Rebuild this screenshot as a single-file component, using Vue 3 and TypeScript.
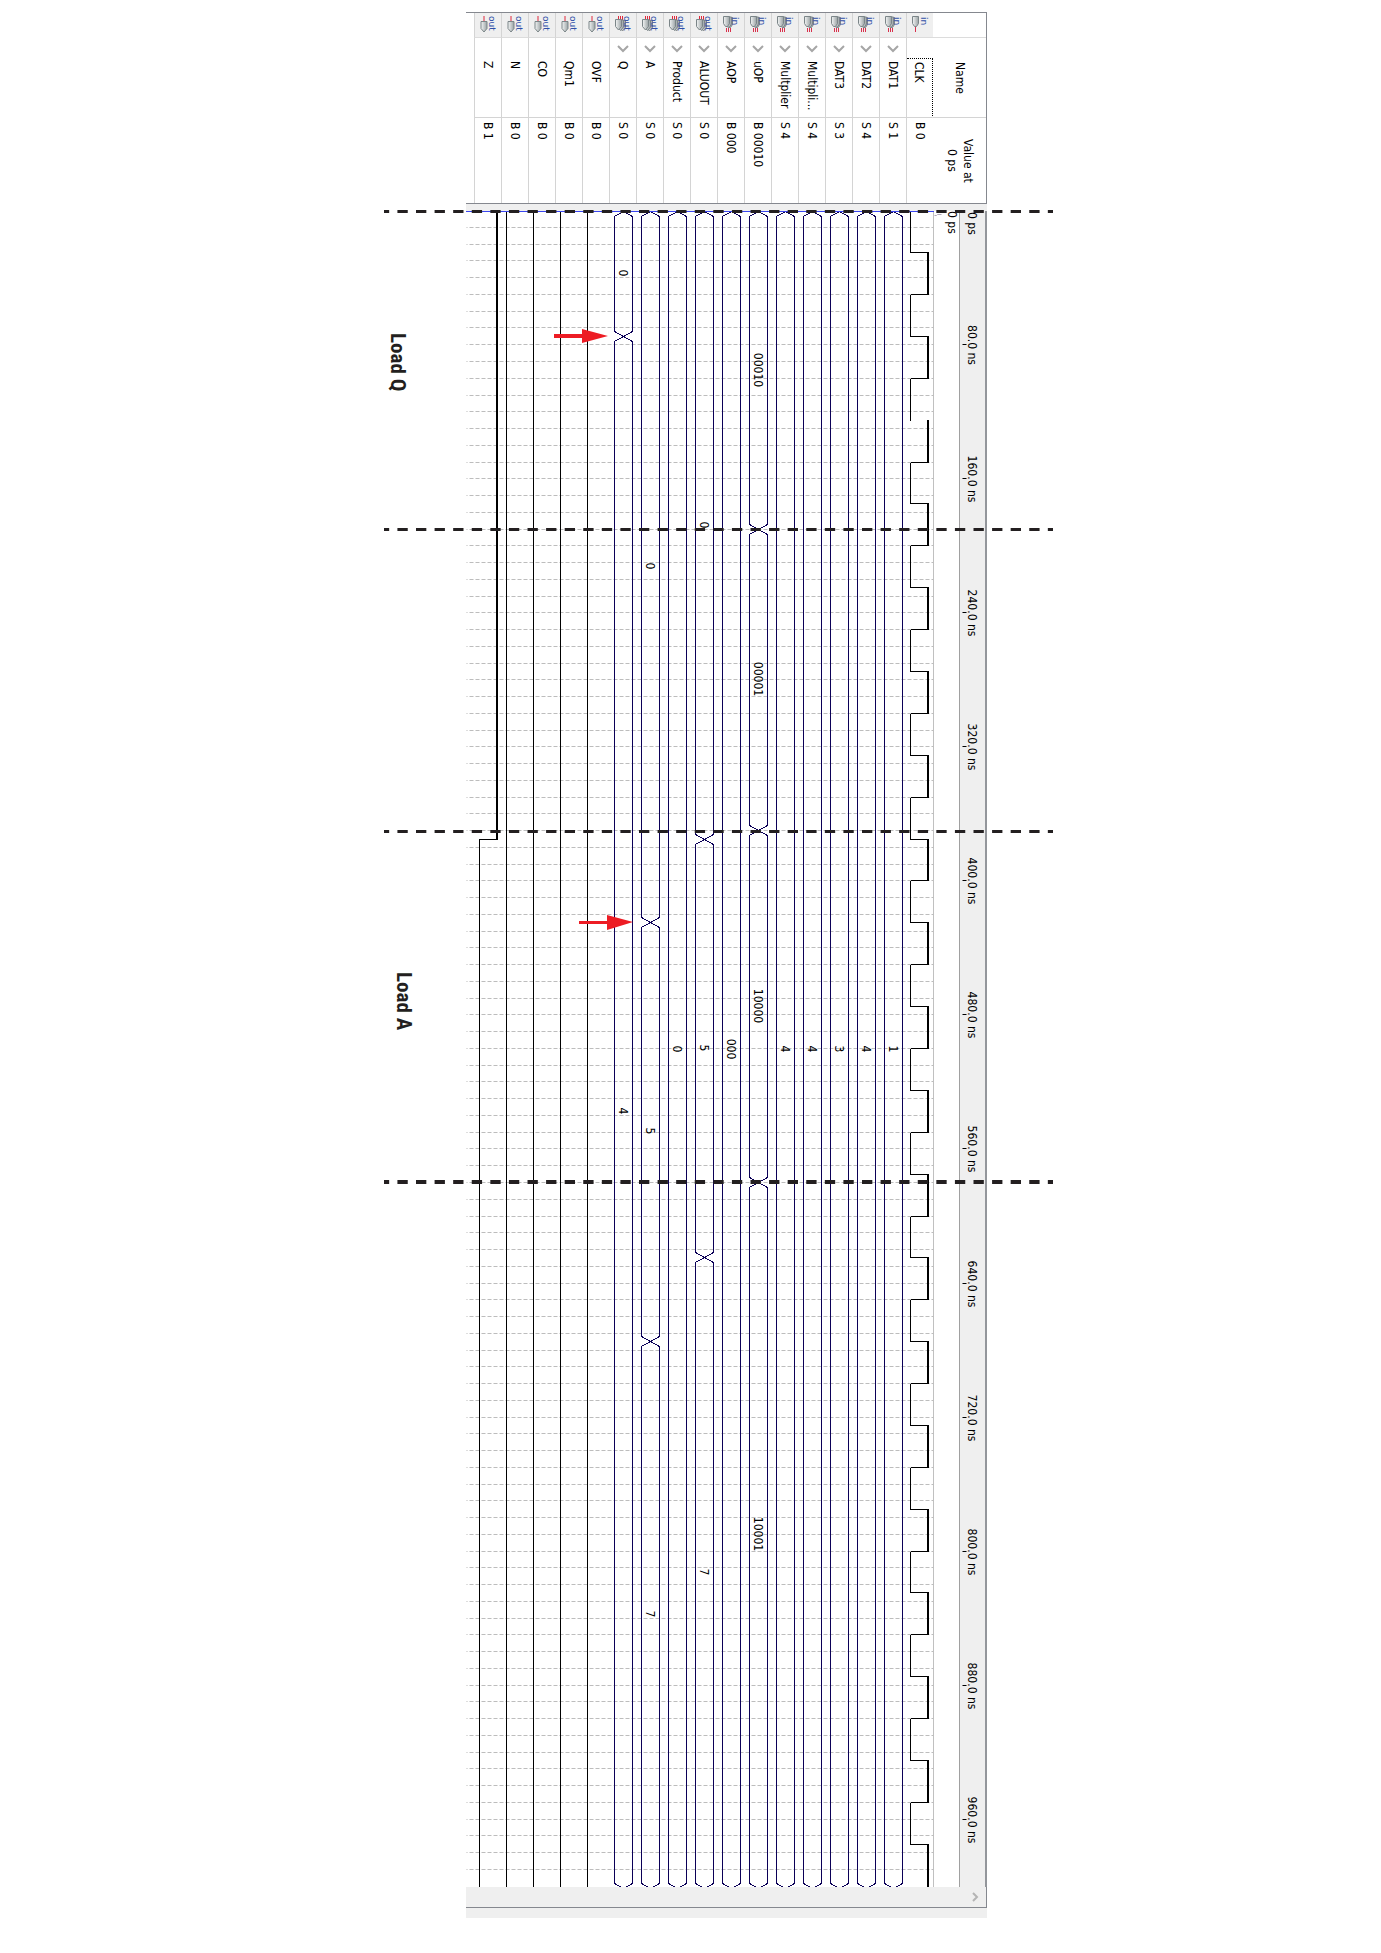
<script setup lang="ts">
interface Signal {
  name: string
  value: string
  dir: 'in' | 'out'
  kind: 'clock' | 'bit' | 'bus'
  edges?: number[]
  labels?: string[]
}

const signals: Signal[] = [
  { name: 'CLK', value: 'B 0', dir: 'in', kind: 'clock' },
  { name: 'DAT1', value: 'S 1', dir: 'in', kind: 'bus', labels: ['1'] },
  { name: 'DAT2', value: 'S 4', dir: 'in', kind: 'bus', labels: ['4'] },
  { name: 'DAT3', value: 'S 3', dir: 'in', kind: 'bus', labels: ['3'] },
  { name: 'Multipli...', value: 'S 4', dir: 'in', kind: 'bus', labels: ['4'] },
  { name: 'Multplier', value: 'S 4', dir: 'in', kind: 'bus', labels: ['4'] },
  { name: 'uOP', value: 'B 00010', dir: 'in', kind: 'bus', edges: [190, 370, 580], labels: ['00010', '00001', '10000', '10001'] },
  { name: 'AOP', value: 'B 000', dir: 'in', kind: 'bus', labels: ['000'] },
  { name: 'ALUOUT', value: 'S 0', dir: 'out', kind: 'bus', edges: [375, 625], labels: ['0', '5', '7'] },
  { name: 'Product', value: 'S 0', dir: 'out', kind: 'bus', labels: ['0'] },
  { name: 'A', value: 'S 0', dir: 'out', kind: 'bus', edges: [425, 675], labels: ['0', '5', '7'] },
  { name: 'Q', value: 'S 0', dir: 'out', kind: 'bus', edges: [75], labels: ['0', '4'] },
  { name: 'OVF', value: 'B 0', dir: 'out', kind: 'bit' },
  { name: 'Qm1', value: 'B 0', dir: 'out', kind: 'bit' },
  { name: 'CO', value: 'B 0', dir: 'out', kind: 'bit' },
  { name: 'N', value: 'B 0', dir: 'out', kind: 'bit' },
  { name: 'Z', value: 'B 1', dir: 'out', kind: 'bit' },
]

const H = 1676
// nanoseconds to chart position
const at = (ns: number): number => Math.max(0, Math.round(ns * 1.6755 - 0.8))
const left = (i: number): number => (i === 0 ? 439 : 440 - 27 * i)

const gridLines = Array.from({ length: 99 }, (_, k) => at((k + 1) * 10))
const ticks = Array.from({ length: 12 }, (_, k) => (k + 1) * 80)

const lowX = left(0) + 5
const highX = left(0) + 23
const clockLow: string[] = []
const clockHigh: string[] = []
for (let t = 0; t < 1000; t += 50) {
  const rise = at(t + 25)
  const last = t === 950
  const fall = last ? H : at(t + 50)
  clockLow.push(`M${lowX} ${at(t)}V${rise}${t === 100 ? '' : `H${highX}`}`)
  clockHigh.push(`M${highX - 1} ${rise}h2V${fall}h-2z`)
  if (!last) clockLow.push(`M${highX} ${fall}H${lowX}`)
}

const zRow = left(16)
const zFall = at(375)

function busPath(i: number, edges: number[] = []): string {
  const l = left(i) + 5
  const r = l + 18
  const c = l + 9
  const stops = [0, ...edges.map(at), H + 1]
  let d = ''
  for (let s = 0; s < stops.length - 1; s++) {
    const a = stops[s]
    const b = stops[s + 1]
    d += `M${c} ${a}L${l} ${a + 5}V${b - 5}L${c} ${b}M${c} ${a}L${r} ${a + 5}V${b - 5}L${c} ${b}`
  }
  return d
}

interface Label { x: number; y: number; text: string }
const labels: Label[] = signals.flatMap((s, i) => {
  const stops = [0, ...(s.edges ?? []).map(at), H]
  return (s.labels ?? []).map((text, k) => ({ x: left(i) + 10, y: Math.floor((stops[k] + stops[k + 1]) / 2), text }))
})

const markers = [
  { y: 211, w: 3 },
  { y: 529, w: 3 },
  { y: 831, w: 3 },
  { y: 1182, w: 4 },
]
</script>

<template>
  <main class="page">
    <figure class="figure">
      <section class="panel">
        <div class="signals">
          <table>
            <thead>
              <tr>
                <th class="pin"></th>
                <th class="name-head">Name</th>
                <th class="value-head">Value at<br />0 ps</th>
              </tr>
            </thead>
            <tbody>
              <tr v-for="s in signals" :key="s.name">
                <td class="pin">
                  <svg width="26" height="24" viewBox="0 0 26 24" aria-hidden="true">
                    <defs>
                      <linearGradient id="metal" x1="0" x2="1" y1="0" y2="0">
                        <stop offset="0" stop-color="#f4f6f6" />
                        <stop offset="1" stop-color="#9aa2a4" />
                      </linearGradient>
                    </defs>
                    <g v-if="s.dir === 'out' && s.kind === 'bit'">
                      <path d="M9 3v5" stroke="#e0283c" />
                      <path d="M6 8.500h6v7l-3 3.500l-3-3.500z" fill="url(#metal)" stroke="#7b8588" />
                    </g>
                    <g v-else-if="s.dir === 'out'">
                      <path d="M8.500 3v4M10.500 3v4M12.500 3v4" stroke="#e0283c" />
                      <path d="M9.500 7.500h6v7l-3 3.500l-3-3.500z" fill="url(#metal)" stroke="#7b8588" />
                      <path d="M7.500 7h6v7l-3 3.500l-3-3.500z" fill="url(#metal)" stroke="#7b8588" />
                      <path d="M5.500 6.500h6v7l-3 3.500l-3-3.500z" fill="url(#metal)" stroke="#7b8588" />
                    </g>
                    <g v-else-if="s.kind === 'clock'">
                      <path d="M8.500 14v5" stroke="#d8304c" />
                      <path d="M5.500 3.500h6v7l-2 3h-2l-2-3z" fill="url(#metal)" stroke="#7b8588" />
                    </g>
                    <g v-else>
                      <path d="M8.500 15v4M10.500 15v4M12.500 15v4" stroke="#d8304c" />
                      <path d="M9.500 4.500h5v7l-2 3h-2l-2-3z" fill="url(#metal)" stroke="#7b8588" />
                      <path d="M7.500 4h6v7l-2 3h-2l-2-3z" fill="url(#metal)" stroke="#7b8588" />
                      <path d="M5.500 3.500h6v7l-2 3h-2l-2-3z" fill="url(#metal)" stroke="#7b8588" />
                    </g>
                    <text v-if="s.dir === 'out'" class="pin-text" transform="translate(14 3) rotate(90)">out</text>
                    <text v-else class="pin-text" transform="translate(14 4) rotate(90)">in</text>
                  </svg>
                </td>
                <td class="name">
                  <div class="name-row">
                    <svg class="chevron" width="12" height="12" viewBox="0 0 12 12" aria-hidden="true">
                      <path v-if="s.kind === 'bus'" d="M1 3l5 5l5-5" fill="none" stroke="#a6a6a6" stroke-width="2" />
                    </svg>
                    <span :class="{ focused: s.kind === 'clock' }">{{ s.name }}</span>
                  </div>
                </td>
                <td class="value">{{ s.value }}</td>
              </tr>
            </tbody>
          </table>
        </div>
        <div class="gap"></div>
        <svg class="chart" width="521" :height="H" :viewBox="`0 0 521 ${H}`" role="img" aria-label="Waveforms">
          <rect x="0" y="0" width="521" :height="H" fill="#fff" />
          <rect x="494" y="0" width="25" :height="H" fill="#efefef" />
          <rect x="493" y="0" width="1" :height="H" fill="#a0a0a0" />
          <rect x="519" y="0" width="2" :height="H" fill="#93969b" />
          <rect x="467" y="0" width="1" :height="H" fill="#c0c0c0" />
          <g transform="translate(0.5 0.5)" fill="none">
            <path v-for="y in gridLines" :key="y" :d="`M0 ${y}H467`" stroke="#bdbdbd" stroke-dasharray="4 2" stroke-dashoffset="3" />
            <path v-for="t in ticks" :key="t" :d="`M496 ${at(t)}h4`" stroke="#000" />
            <path d="M468 4h2l1-1h4" stroke="#b0a8b8" />
            <g shape-rendering="crispEdges">
              <template v-for="(s, i) in signals" :key="s.name">
                <path v-if="s.kind === 'bus'" :d="busPath(i, s.edges)" stroke="#0b0057" />
                <path v-else-if="s.kind === 'bit' && s.name !== 'Z'" :d="`M${left(i) + 5} 0V${H}`" stroke="#000" />
              </template>
              <path :d="clockLow.join('')" stroke="#000" />
              <path :d="`M${zRow + 23} ${zFall}H${zRow + 5}V${H}`" stroke="#000" />
            </g>
          </g>
          <path :d="clockHigh.join('')" />
          <rect :x="zRow + 22" y="0" width="2" :height="zFall + 1" />
          <rect x="0" y="0" width="468" height="1" fill="#3a46f0" />
          <text v-for="l in labels" :key="`${l.x}-${l.y}`" class="mark" :transform="`translate(${l.x} ${l.y}) rotate(90)`">{{ l.text }}</text>
          <text v-for="t in ticks" :key="t" class="mark" :transform="`translate(502 ${at(t) + 1}) rotate(90)`">{{ t }}.0 ns</text>
          <text class="mark start" transform="translate(502 1) rotate(90)">0 ps</text>
          <text class="mark start" transform="translate(482 0) rotate(90)">0 ps</text>
        </svg>
        <div class="scroll-end">
          <svg width="8" height="10" viewBox="0 0 8 10" aria-hidden="true">
            <path d="M1 1l4 4l-4 4" fill="none" stroke="#b4b4b4" stroke-width="2" />
          </svg>
        </div>
        <div class="footer"></div>
      </section>

      <svg class="notes" width="669" height="1953" viewBox="0 0 669 1953" role="img" aria-label="Load Q and Load A phases">
        <path
          v-for="m in markers"
          :key="m.y"
          :d="m.w % 2 ? `M0 ${m.y + 0.5}H669` : `M0 ${m.y}H669`"
          :stroke-width="m.w"
          pathLength="648"
          stroke="#231f20"
          stroke-dasharray="10 8"
          stroke-dashoffset="5"
        />
        <path d="M170 334h28v-5l26 7l-26 7v-5h-28z" fill="#ed1c24" />
        <path d="M195 921h28v-6l26 7l-26 8v-6h-28z" fill="#ed1c24" />
        <text class="phase" transform="translate(7 333) rotate(90)">Load Q</text>
        <text class="phase" transform="translate(13 972) rotate(90)">Load A</text>
      </svg>
    </figure>
  </main>
</template>

<style>
body {
  margin: 0;
  background: #fff;
}
</style>

<style scoped>
.page {
  display: flex;
  justify-content: center;
  min-height: 100vh;
  padding-left: 56px;
  box-sizing: border-box;
  font: 12px/16px "DejaVu Sans Condensed", "DejaVu Sans", sans-serif;
  color: #000;
}
.figure {
  position: relative;
  flex: none;
  width: 669px;
  margin: 0;
  padding-top: 12px;
  box-sizing: border-box;
}
.panel {
  width: 521px;
  margin-left: 82px;
}
.signals {
  display: flex;
  justify-content: flex-end;
  height: 192px;
  box-sizing: border-box;
  border: 1px solid #85888f;
  border-left: 0;
  background: #fff;
}
table {
  writing-mode: vertical-rl;
  border-spacing: 0;
  table-layout: fixed;
  inline-size: 190px;
}
th,
td {
  box-sizing: border-box;
  padding: 0;
  font-weight: 400;
  white-space: nowrap;
}
th {
  block-size: 53px;
  text-align: center;
}
td {
  block-size: 27px;
  border-block-end: 1px solid #d4d4d4;
}
.pin {
  inline-size: 25px;
  border-inline-end: 1px solid #dcdcdc;
}
td.pin {
  background: #efefef;
}
.pin svg {
  display: block;
  writing-mode: horizontal-tb;
}
.name,
.name-head {
  inline-size: 80px;
  border-inline-end: 1px solid #d4d4d4;
}
.name-row {
  display: flex;
  align-items: center;
  gap: 3px;
  block-size: 26px;
  padding-inline-start: 5px;
}
.name-row span {
  flex: 1;
  padding-inline-start: 3px;
  line-height: 26px;
}
.chevron {
  flex: none;
}
.name-row .focused {
  margin-inline-end: 1px;
  box-sizing: border-box;
  block-size: 26px;
  border-inline-start: 1px dotted #000;
  border-block-start: 1px dotted #000;
}
.value {
  padding-inline-start: 4px;
}
.pin-text {
  font: 9px "DejaVu Sans", sans-serif;
  fill: #2f4fa8;
}
.gap {
  height: 7px;
  background: #efefef;
}
.chart {
  display: block;
}
.mark {
  text-anchor: middle;
}
.start {
  text-anchor: start;
}
.scroll-end {
  display: flex;
  align-items: center;
  justify-content: flex-end;
  height: 21px;
  padding-right: 6px;
  box-sizing: border-box;
  border-right: 1px solid #85888f;
  border-bottom: 1px solid #85888f;
  background: #efefef;
}
.footer {
  height: 10px;
  background: #efefef;
}
.notes {
  position: absolute;
  top: 0;
  left: 0;
}
.phase {
  font: bold 21px "Liberation Sans Narrow", "Roboto Condensed", "Liberation Sans", sans-serif;
  fill: #231f20;
}
</style>
